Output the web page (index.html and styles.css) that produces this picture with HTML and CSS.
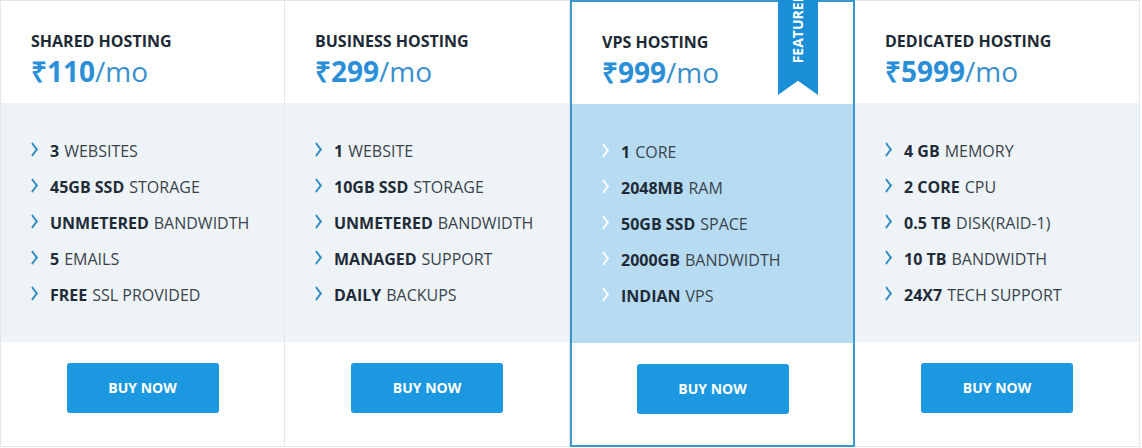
FILE: index.html
```html
<!DOCTYPE html>
<html lang="en">
<head>
    <meta charset="utf-8" />
    <title>Hosting Plans</title>
    <link rel="stylesheet" href="styles.css">
</head>
<body>
    <div class="plans">
        <div class="plan">
            <div class="plan-head">
                <h2>SHARED HOSTING</h2>
                <div class="price"><b>₹110</b>/mo</div>
            </div>
            <ul class="features">
                <li><b>3</b> WEBSITES</li>
                <li><b>45GB SSD</b> STORAGE</li>
                <li><b>UNMETERED</b> BANDWIDTH</li>
                <li><b>5</b> EMAILS</li>
                <li><b>FREE</b> SSL PROVIDED</li>
            </ul>
            <div class="plan-foot"><a class="buy" href="#">BUY NOW</a></div>
        </div>
        <div class="plan">
            <div class="plan-head">
                <h2>BUSINESS HOSTING</h2>
                <div class="price"><b>₹299</b>/mo</div>
            </div>
            <ul class="features">
                <li><b>1</b> WEBSITE</li>
                <li><b>10GB SSD</b> STORAGE</li>
                <li><b>UNMETERED</b> BANDWIDTH</li>
                <li><b>MANAGED</b> SUPPORT</li>
                <li><b>DAILY</b> BACKUPS</li>
            </ul>
            <div class="plan-foot"><a class="buy" href="#">BUY NOW</a></div>
        </div>
        <div class="plan featured">
            <div class="ribbon"><span>FEATURED</span></div>
            <div class="plan-head">
                <h2>VPS HOSTING</h2>
                <div class="price"><b>₹999</b>/mo</div>
            </div>
            <ul class="features">
                <li><b>1</b> CORE</li>
                <li><b>2048MB</b> RAM</li>
                <li><b>50GB SSD</b> SPACE</li>
                <li><b>2000GB</b> BANDWIDTH</li>
                <li><b>INDIAN</b> VPS</li>
            </ul>
            <div class="plan-foot"><a class="buy" href="#">BUY NOW</a></div>
        </div>
        <div class="plan">
            <div class="plan-head">
                <h2>DEDICATED HOSTING</h2>
                <div class="price"><b>₹5999</b>/mo</div>
            </div>
            <ul class="features">
                <li><b>4 GB</b> MEMORY</li>
                <li><b>2 CORE</b> CPU</li>
                <li><b>0.5 TB</b> DISK(RAID-1)</li>
                <li><b>10 TB</b> BANDWIDTH</li>
                <li><b>24X7</b> TECH SUPPORT</li>
            </ul>
            <div class="plan-foot"><a class="buy" href="#">BUY NOW</a></div>
        </div>
    </div>
</body>
</html>
```

FILE: styles.css
```css
html, body {
    margin: 0;
    padding: 0;
    background: #fff;
    font-family: "Open Sans", "Liberation Sans", sans-serif;
    color: #2c3640;
}
.plans {
    display: grid;
    grid-template-columns: repeat(4, 285px);
    width: 1141px;
}
.plan {
    position: relative;
    border: 1px solid #e4e7ea;
    border-left: none;
    height: 447px;
    box-sizing: border-box;
    display: flex;
    flex-direction: column;
}
.plan:first-child {
    border-left: 1px solid #e4e7ea;
}
.plan-head {
    padding: 29px 30px 15px;
}
h2 {
    margin: 0;
    font-size: 16px;
    line-height: 22px;
    font-weight: 700;
    color: #1d2a35;
}
.price {
    margin-top: 2px;
    font-size: 28px;
    line-height: 34px;
    color: #3a8fcd;
}
.price b {
    color: #2b8fd8;
    font-weight: 700;
}
.features {
    list-style: none;
    margin: 0;
    padding: 30px 0 29px 30px;
    background: #eef3f7;
}
.features li {
    font-size: 16px;
    line-height: 36px;
    color: #3a434c;
    display: flex;
    align-items: center;
}
.features li::before {
    content: "";
    width: 7px;
    height: 7px;
    border-top: 2px solid #2f8ac2;
    border-right: 2px solid #2f8ac2;
    transform: rotate(45deg) skew(8deg, 8deg);
    margin: -4px 13px 0 -3px;
}
.features b {
    color: #1f2c38;
    font-weight: 700;
    margin-right: 5px;
}
.plan-foot {
    flex: 1;
    display: flex;
    justify-content: center;
    padding-top: 21px;
}
.buy {
    display: block;
    width: 152px;
    height: 50px;
    line-height: 50px;
    text-align: center;
    background: #1b98e0;
    color: #fff;
    border-radius: 3px;
    font-size: 14px;
    font-weight: 700;
    text-decoration: none;
}

/* featured column */
.plan.featured {
    border: 2px solid #3a98cf;
}
.featured .features {
    background: #b7dcf2;
}
.featured .features li::before {
    border-color: #fff;
}
.ribbon {
    position: absolute;
    top: -2px;
    right: 35px;
    width: 40px;
    height: 95px;
    background: #1a8ed7;
    clip-path: polygon(0 0, 100% 0, 100% 100%, 50% 85%, 0 100%);
}
.ribbon span {
    position: absolute;
    bottom: 32px;
    left: 11px;
    writing-mode: vertical-rl;
    transform: rotate(180deg);
    color: #fff;
    font-size: 14px;
    font-weight: 700;
    line-height: 18px;
    white-space: nowrap;
}
```
